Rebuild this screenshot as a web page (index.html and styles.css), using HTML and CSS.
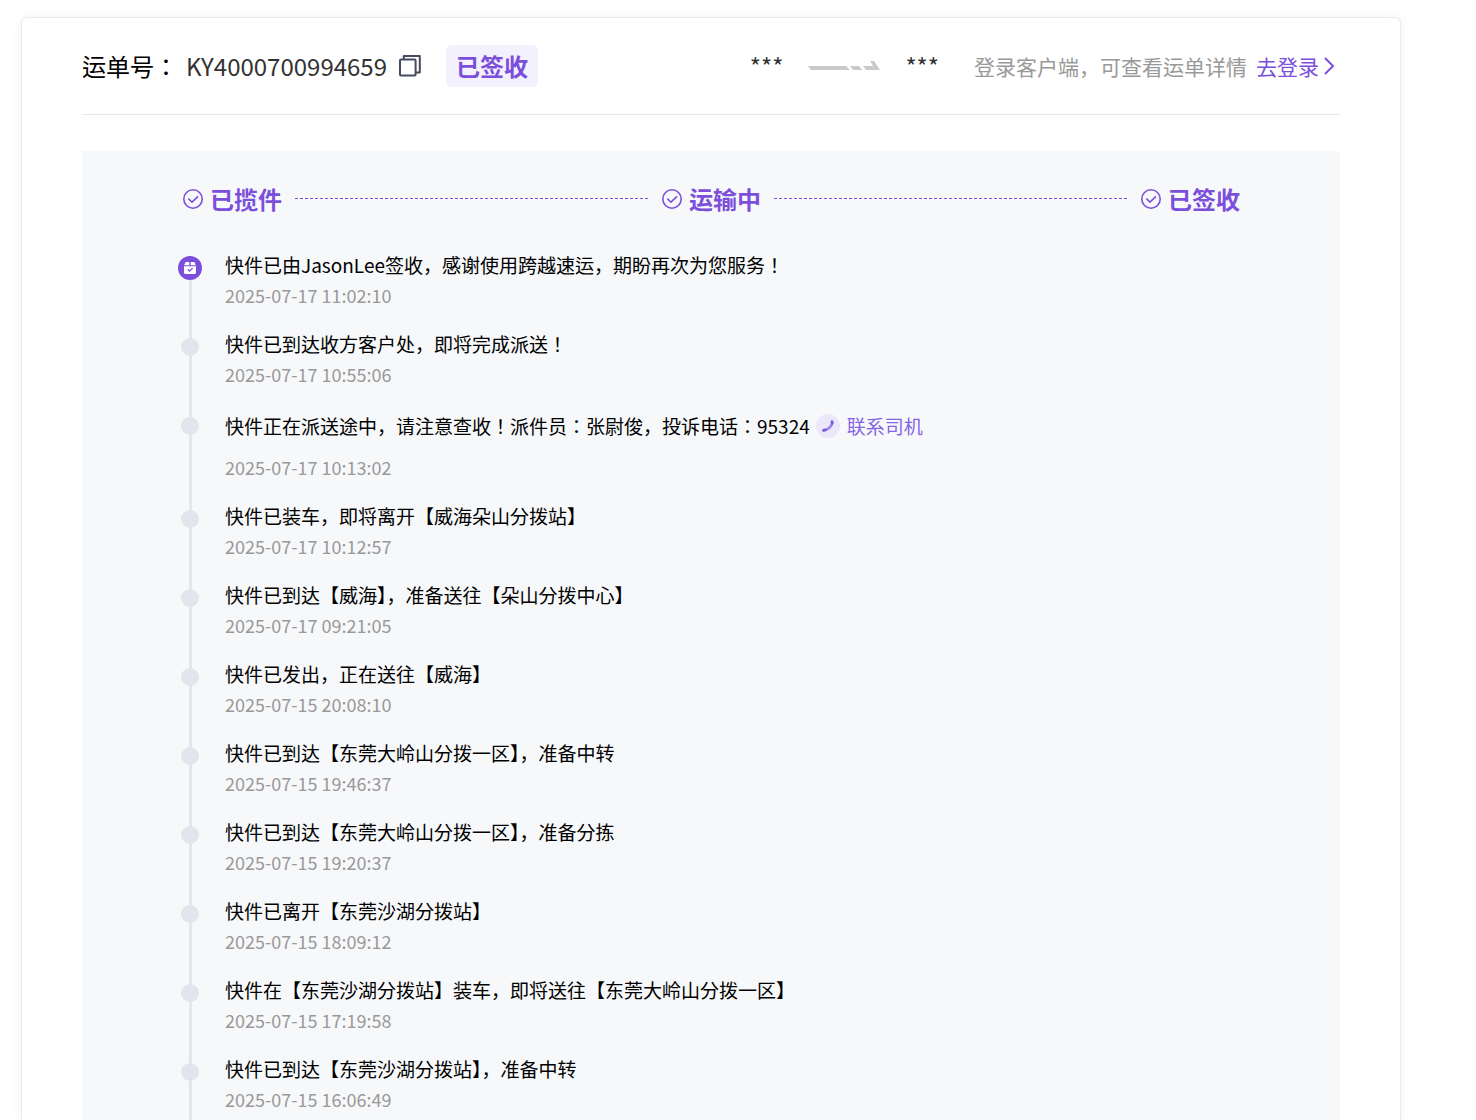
FILE: index.html
```html
<!DOCTYPE html>
<html>
<head>
	<meta charset="utf-8">
	<title>运单号：KY4000700994659</title>
	<link rel="stylesheet" href="styles.css">
</head>
<body>
	<svg class="defs" width="0" height="0">
		<symbol id="check" viewBox="0 0 22 22">
			<circle cx="11" cy="11" r="9.2" fill="none" stroke="currentColor" stroke-width="1.6"/>
			<path d="M6.4 10.6l3.6 3.6 6-5.8" fill="none" stroke="currentColor" stroke-width="1.6"/>
		</symbol>
	</svg>

	<main class="card">
		<header class="head">
			<span class="label">运单号：</span>
			<span class="number">KY4000700994659</span>
			<button class="copy" type="button" aria-label="复制">
				<svg width="22" height="22" viewBox="0 0 22 22" fill="none" stroke="#454a5c" stroke-width="2" stroke-linejoin="round">
					<rect x="1" y="4.4" width="15.6" height="16.2" rx="1"/>
					<path d="M4.8 4V1h16v16.4h-4"/>
				</svg>
			</button>
			<span class="tag">已签收</span>

			<div class="route">
				<span class="place">***</span>
				<svg width="72" height="10" viewBox="0 0 72 10" fill="#c9c9c9">
					<path d="M0 5h38l4 4H3z"/>
					<path d="M42 5h9l3 4h-9z"/>
					<path d="M55 5h10l-3-5h4l6 9H58z"/>
				</svg>
				<span class="place">***</span>
			</div>
			<span class="tip">登录客户端，可查看运单详情</span>
			<a class="login" href="#">去登录<svg width="20" height="22" viewBox="0 0 20 22" fill="none" stroke="currentColor" stroke-width="2"><path d="M6 3l8 8-8 8"/></svg></a>
		</header>

		<section class="panel">
			<div class="steps">
				<span class="step"><svg width="22" height="22"><use href="#check"/></svg>已揽件</span>
				<span class="dash"></span>
				<span class="step"><svg width="22" height="22"><use href="#check"/></svg>运输中</span>
				<span class="dash"></span>
				<span class="step"><svg width="22" height="22"><use href="#check"/></svg>已签收</span>
			</div>

			<ol class="timeline">
				<li class="current">
					<svg class="parcel" width="24" height="24" viewBox="0 0 24 24">
						<circle cx="12" cy="12" r="12" fill="#7b4fdb"/>
						<path d="M7.6 6h3.7v3.2H6.2zM12.7 6h3.7l1.4 3.2h-5.1z" fill="#fff"/>
						<path d="M6 10.2h12v6.3a1.5 1.5 0 0 1-1.5 1.5h-9A1.5 1.5 0 0 1 6 16.5z" fill="#fff"/>
						<path d="M9.8 13.3l1.8 1.8 3-3" fill="none" stroke="#7b4fdb" stroke-width="1.3"/>
					</svg>
					<div class="text">快件已由JasonLee签收，感谢使用跨越速运，期盼再次为您服务！</div>
					<time>2025-07-17 11:02:10</time>
				</li>
				<li>
					<div class="text">快件已到达收方客户处，即将完成派送！</div>
					<time>2025-07-17 10:55:06</time>
				</li>
				<li>
					<div class="text with-driver">快件正在派送途中，请注意查收！派件员：张尉俊，投诉电话：95324
						<a class="driver" href="#">
							<svg width="24" height="24" viewBox="0 0 24 24">
								<circle cx="12" cy="12" r="12" fill="#ece8fb"/>
								<path d="M16 8c.4 4-4 8.400-8.500 8" fill="none" stroke="#9b82ea" stroke-width="2.400" stroke-linecap="round"/>
								<path d="M16 7.600l.4 1.800M7.400 16.400l2-.4" fill="none" stroke="#7b57e0" stroke-width="2.600" stroke-linecap="round"/>
							</svg>联系司机</a>
					</div>
					<time>2025-07-17 10:13:02</time>
				</li>
				<li>
					<div class="text">快件已装车，即将离开【威海朵山分拨站】</div>
					<time>2025-07-17 10:12:57</time>
				</li>
				<li>
					<div class="text">快件已到达【威海】，准备送往【朵山分拨中心】</div>
					<time>2025-07-17 09:21:05</time>
				</li>
				<li>
					<div class="text">快件已发出，正在送往【威海】</div>
					<time>2025-07-15 20:08:10</time>
				</li>
				<li>
					<div class="text">快件已到达【东莞大岭山分拨一区】，准备中转</div>
					<time>2025-07-15 19:46:37</time>
				</li>
				<li>
					<div class="text">快件已到达【东莞大岭山分拨一区】，准备分拣</div>
					<time>2025-07-15 19:20:37</time>
				</li>
				<li>
					<div class="text">快件已离开【东莞沙湖分拨站】</div>
					<time>2025-07-15 18:09:12</time>
				</li>
				<li>
					<div class="text">快件在【东莞沙湖分拨站】装车，即将送往【东莞大岭山分拨一区】</div>
					<time>2025-07-15 17:19:58</time>
				</li>
				<li>
					<div class="text">快件已到达【东莞沙湖分拨站】，准备中转</div>
					<time>2025-07-15 16:06:49</time>
				</li>
			</ol>
		</section>
	</main>
</body>
</html>
```
FILE: styles.css
```css
*{
	box-sizing:border-box;
}
body{
	margin:0;
	padding:17px 75px 0 21px;
	min-height:100vh;
	display:flex;
	flex-direction:column;
	background:#fff;
	color:#000;
	font-family:"Noto Sans CJK JP", "Noto Sans CJK SC", sans-serif;
}
a{
	text-decoration:none;
}
.defs{
	position:absolute;
}
.card{
	flex:1;
	display:flex;
	flex-direction:column;
	padding:0 60px;
	border:1px solid #ebebeb;
	border-bottom:0;
	border-radius:6px 6px 0 0;
	box-shadow:0 0 12px rgba(0,0,0,.05);
}

/* waybill header */
.head{
	display:flex;
	align-items:center;
	padding:27px 1px 27px 0;
	border-bottom:1px solid #e8e8e8;
	font-size:24px;
	line-height:42px;
	white-space:nowrap;
}
.number{
	margin-left:8px;
	color:#333;
}
.copy{
	display:flex;
	margin:0 25px 0 12px;
	padding:0;
	border:0;
	background:none;
	cursor:pointer;
}
.tag{
	padding:0 10px;
	border-radius:6px;
	background:#f4f1fe;
	color:#7b4fdb;
	font-weight:bold;
}
.route{
	display:flex;
	align-items:center;
	gap:25px;
	margin:0 35px 0 auto;
	color:#333;
}
.tip{
	color:#999;
	font-size:21px;
}
.login{
	display:flex;
	align-items:center;
	margin-left:9px;
	color:#7b4fdb;
	font-size:21px;
}

/* progress */
.panel{
	flex:1;
	display:flex;
	flex-direction:column;
	margin-top:36px;
	background:#f7f8fa;
}
.steps{
	display:flex;
	align-items:center;
	gap:13px;
	padding:32px 100px 0;
	color:#7b4fdb;
	font-size:24px;
	font-weight:bold;
	line-height:32px;
}
.step{
	display:flex;
	align-items:center;
	gap:6px;
}
.dash{
	flex:1;
	height:2px;
	border-top:1px dashed #7b4fdb;
}

/* track list */
.timeline{
	flex:1;
	display:flex;
	flex-direction:column;
	list-style:none;
	margin:34px 0 0;
	padding:0 96px;
}
.timeline li{
	position:relative;
	padding:0 0 19px 47px;
}
.timeline li:last-child{
	flex:1;
	padding-bottom:0;
}
.timeline li::before{
	content:"";
	position:absolute;
	top:0;
	bottom:0;
	left:11px;
	width:3px;
	background:#e3e6ec;
}
.timeline li::after{
	content:"";
	position:absolute;
	top:10px;
	left:3px;
	width:18px;
	height:18px;
	border-radius:50%;
	background:#e3e5ec;
}
.timeline .current::before{
	top:19px;
}
.timeline .current::after{
	display:none;
}
.parcel{
	position:absolute;
	top:7px;
	left:0;
}
.text{
	font-size:19px;
	line-height:32px;
}
.with-driver{
	display:flex;
	align-items:center;
	gap:6px;
	margin-bottom:8px;
	line-height:38px;
}
.driver{
	display:flex;
	align-items:center;
	gap:7px;
	color:#8565e6;
}
time{
	display:block;
	color:#999;
	font-size:18px;
	line-height:28px;
}
```
